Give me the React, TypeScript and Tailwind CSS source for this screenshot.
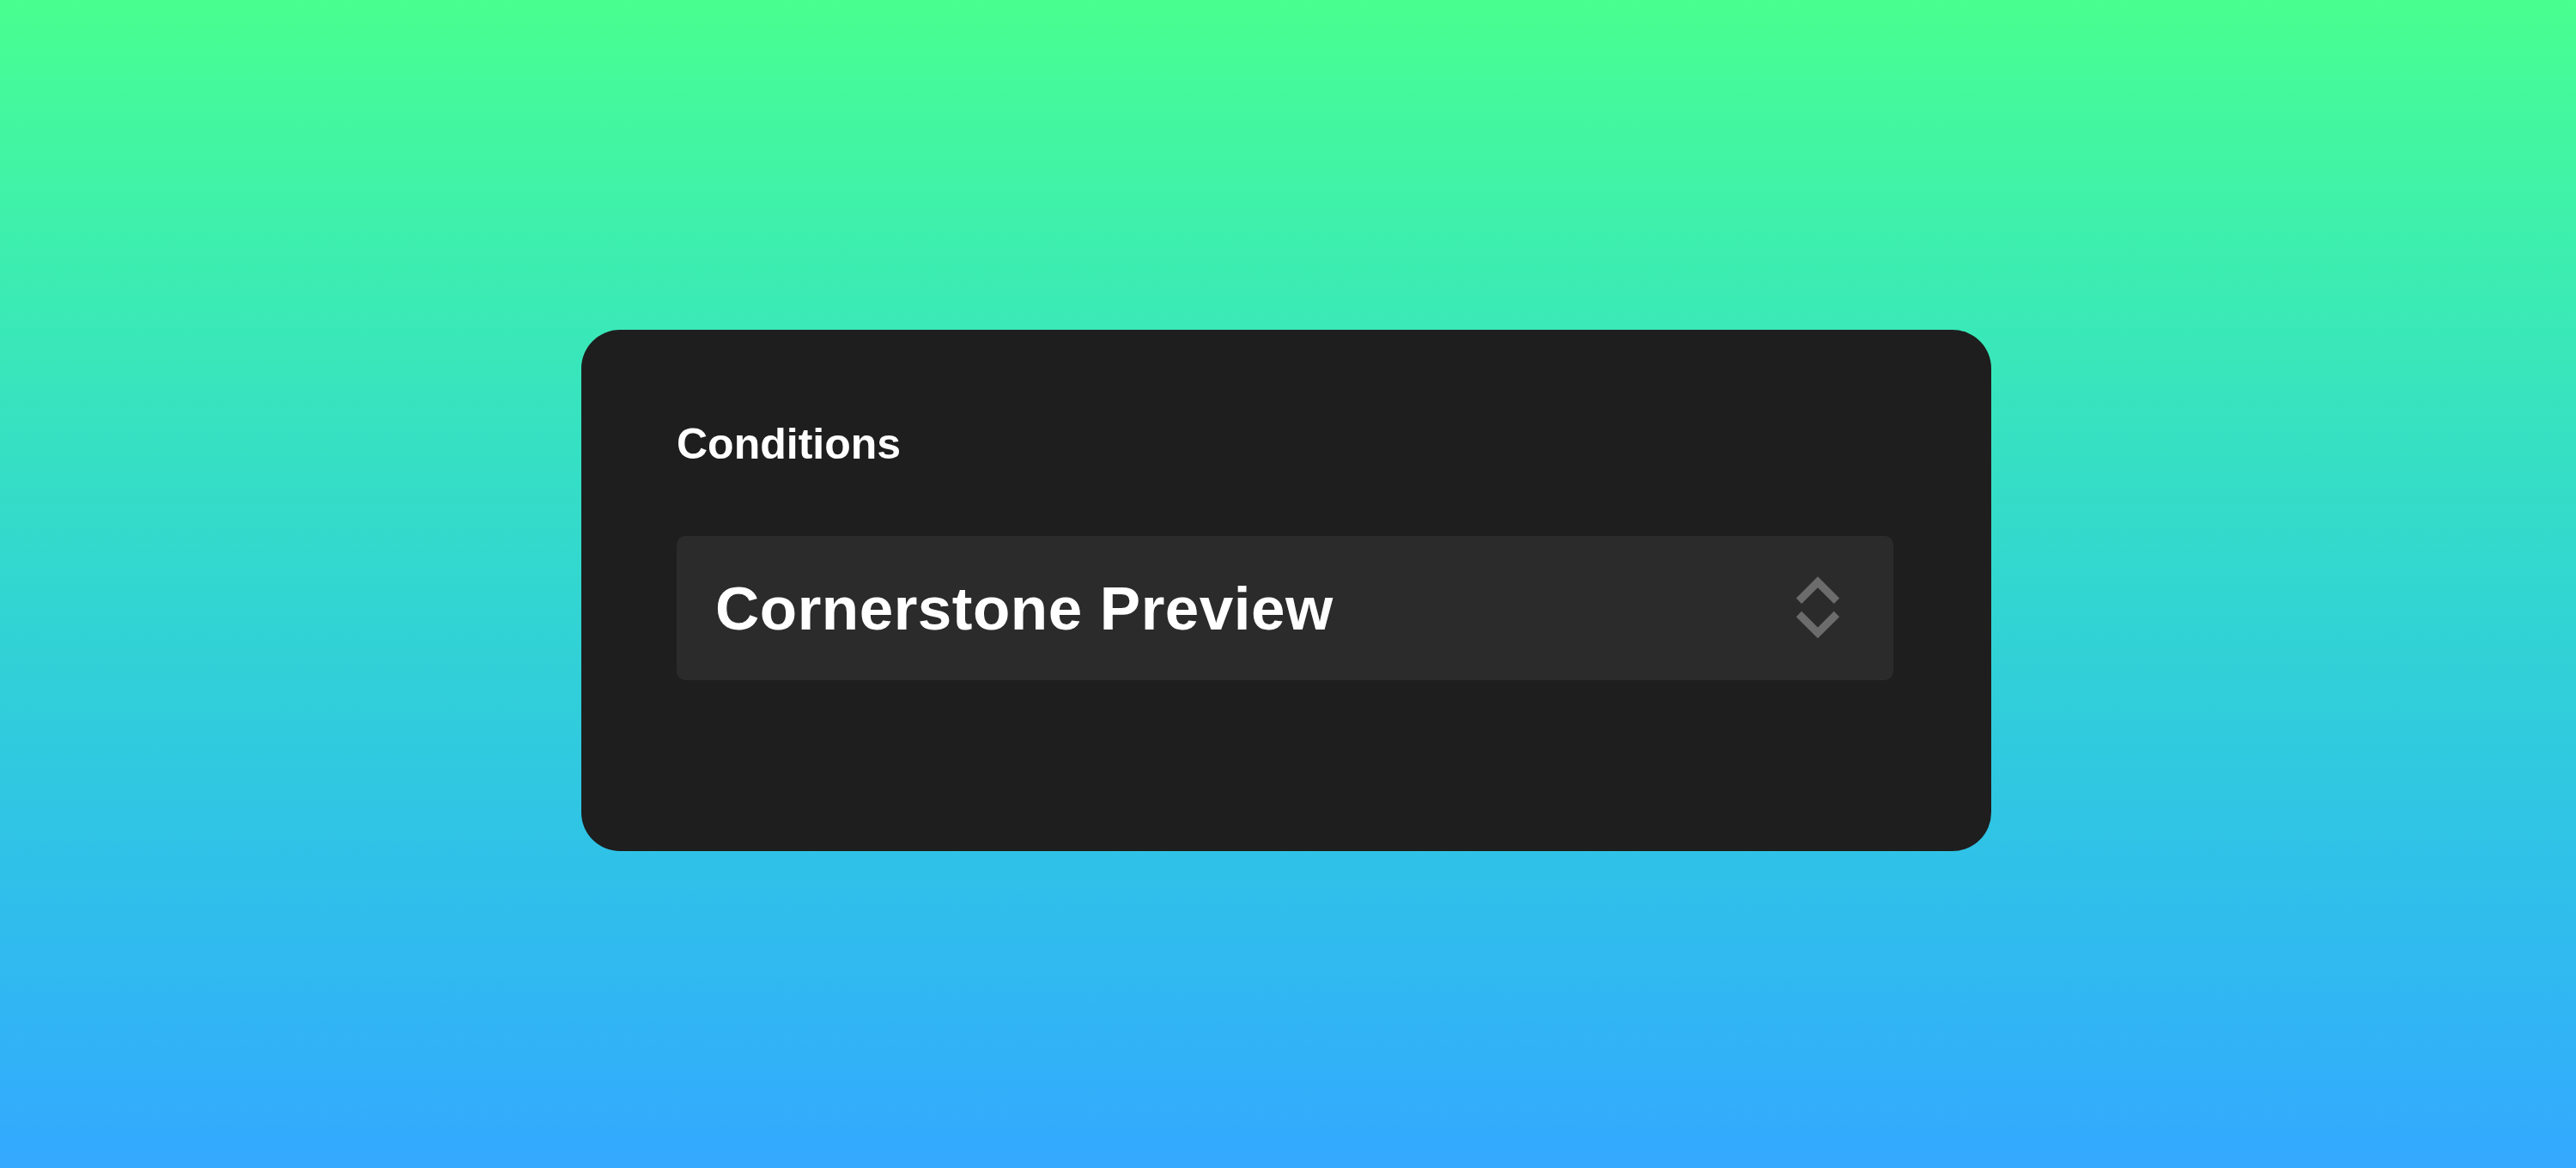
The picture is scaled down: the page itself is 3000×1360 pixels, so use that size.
import React from "react";

function UpDownIcon() {
  return (
    <svg width="60" height="80" viewBox="0 0 60 80" fill="none" aria-hidden="true">
      <polyline points="8,31.7 30,9.7 52,31.7" stroke="#6c6c6c" strokeWidth="9" strokeLinecap="butt" strokeLinejoin="miter" />
      <polyline points="8,47 30,69 52,47" stroke="#6c6c6c" strokeWidth="9" strokeLinecap="butt" strokeLinejoin="miter" />
    </svg>
  );
}

export default function App() {
  return (
    <div
      className="h-[1360px] w-full bg-linear-to-b from-[#48ff8f] to-[#34a8ff] pt-[384px]"
      style={{ fontFamily: '"Liberation Sans", Arial, sans-serif' }}
    >
      <div className="ml-[677px] flex h-[607px] w-[1642px] flex-col rounded-[45px] bg-[#1e1e1e] pl-[111px] pr-[114px] pt-[108px]">
        <div className="text-[50px] font-bold leading-none text-white">Conditions</div>
        <div className="mt-[82px] flex h-[168px] w-full items-center justify-between rounded-[10px] bg-[#2b2b2b] pl-[45px] pr-[58px]">
          <span className="text-[71px] font-bold leading-none tracking-[0.5px] text-white">Cornerstone Preview</span>
          <UpDownIcon />
        </div>
      </div>
    </div>
  );
}
